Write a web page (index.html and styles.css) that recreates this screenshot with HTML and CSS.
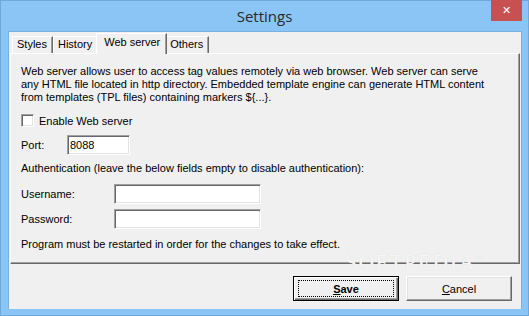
FILE: index.html
```html
<!DOCTYPE html>
<html lang="en">
<head>
    <meta charset="UTF-8">
    <title>Settings</title>
    <link rel="stylesheet" href="styles.css">
</head>
<body>
    <div class="window">
        <div class="titlebar">
            <span class="title">Settings</span>
            <div class="close">&#x2715;</div>
        </div>
        <div class="client">
            <div class="tabs">
                <div class="tab">Styles</div>
                <div class="tab">History</div>
                <div class="tab active">Web server</div>
                <div class="tab">Others</div>
            </div>
            <div class="panel">
                <p class="desc">Web server allows user to access tag values remotely via web browser. Web server can serve<br>any HTML file located in http directory. Embedded template engine can generate HTML content<br>from templates (TPL files) containing markers ${...}.</p>
                <div class="check-row">
                    <span class="checkbox"></span>
                    <span>Enable Web server</span>
                </div>
                <div class="field port-row">
                    <span class="label port-label">Port:</span>
                    <div class="input port-input">8088</div>
                </div>
                <p class="auth">Authentication (leave the below fields empty to disable authentication):</p>
                <div class="field user-row">
                    <span class="label">Username:</span>
                    <div class="input wide"></div>
                </div>
                <div class="field pass-row">
                    <span class="label">Password:</span>
                    <div class="input wide"></div>
                </div>
                <p class="note">Program must be restarted in order for the changes to take effect.</p>
            </div>
            <div class="buttons">
                <div class="btn default"><span class="focus"><u>S</u>ave</span></div>
                <div class="btn"><span><u>C</u>ancel</span></div>
            </div>
            <div class="mark">SOFTPEDIA<sup>™</sup></div>
        </div>
    </div>
</body>
</html>
```

FILE: styles.css
```css
body {
    margin: 0;
    font-family: "Liberation Sans", Arial, sans-serif;
    font-size: 11px;
    color: #000;
}
.window {
    width: 529px;
    height: 316px;
    background: #8bc5f6;
    box-sizing: border-box;
    border: 1px solid #6fa9dc;
}
.titlebar {
    position: relative;
    height: 30px;
    text-align: center;
}
.title {
    display: inline-block;
    margin-top: 5px;
    font-family: "Open Sans", "Noto Sans", sans-serif;
    font-size: 15px;
    line-height: 20px;
    color: #2a2a2a;
}
.close {
    position: absolute;
    top: -1px;
    right: 6px;
    width: 31px;
    height: 21px;
    background: #c75050;
    color: #fff;
    font-family: "DejaVu Sans", sans-serif;
    font-size: 11px;
    font-weight: bold;
    line-height: 21px;
    text-align: center;
}
.client {
    position: relative;
    margin: 0 6px 0 7px;
    height: 278px;
    background: #f0f0f0;
    padding: 1px 1px 0;
    box-sizing: border-box;
    border: 1px solid #78b0e0;
    border-bottom: none;
}
.tabs {
    display: flex;
    align-items: flex-end;
    height: 20px;
    padding-left: 2px;
}
.tab {
    height: 17px;
    box-sizing: border-box;
    padding: 0 5px 0 4px;
    line-height: 15px;
    border-top: 1px solid #fff;
    border-left: 1px solid #fff;
    border-right: 1px solid #696969;
    box-shadow: inset -1px 0 #a0a0a0;
    background: #f0f0f0;
}
.tab.active {
    position: relative;
    z-index: 1;
    height: 21px;
    margin: 0 -2px -1px;
    padding: 0 6px 0 7px;
    line-height: 16px;
}
.panel {
    border-top: 1px solid #fff;
    border-left: 1px solid #fff;
    border-right: 1px solid #696969;
    border-bottom: 1px solid #696969;
    box-shadow: inset -1px -1px #a0a0a0;
    padding: 11px 10px 12px;
}
p {
    margin: 0;
    line-height: 13px;
    white-space: nowrap;
}
.check-row {
    display: flex;
    align-items: center;
    gap: 5px;
    margin-top: 10px;
    height: 13px;
}
.checkbox, .input {
    box-sizing: border-box;
    background: #fff;
    border: 1px solid;
    border-color: #a0a0a0 #fff #fff #a0a0a0;
    box-shadow: inset 1px 1px #696969, inset -1px -1px #e3e3e3;
}
.checkbox {
    width: 13px;
    height: 13px;
}
.field {
    display: flex;
    align-items: center;
    height: 20px;
}
.port-row {
    margin-top: 8px;
}
.label {
    width: 93px;
}
.port-label {
    width: 46px;
}
.input {
    height: 20px;
    padding: 0 2px;
    line-height: 18px;
    font-size: 11px;
}
.port-input {
    width: 63px;
}
.wide {
    width: 147px;
}
.auth {
    margin-top: 7px;
}
.user-row {
    margin-top: 9px;
}
.pass-row {
    margin-top: 5px;
}
.note {
    margin-top: 9px;
}
.buttons {
    display: flex;
    justify-content: flex-end;
    gap: 7px;
    margin-top: 12px;
    padding-right: 8px;
}
.btn {
    width: 106px;
    height: 25px;
    box-sizing: border-box;
    display: flex;
    align-items: center;
    justify-content: center;
    border: 1px solid;
    border-color: #fff #696969 #696969 #fff;
    box-shadow: inset -1px -1px #a0a0a0, inset 1px 1px #e3e3e3;
    font-size: 11px;
}
.btn.default {
    border: 1px solid #000;
    box-shadow: inset 1px 1px #fff, inset -1px -1px #696969, inset -2px -2px #a0a0a0;
    font-weight: bold;
}
.focus {
    display: flex;
    align-items: center;
    justify-content: center;
    width: 96px;
    height: 17px;
    box-sizing: border-box;
    border: 1px dotted #000;
}
.mark {
    position: absolute;
    left: 336px;
    top: 218px;
    font-family: "Liberation Serif", serif;
    font-size: 21px;
    letter-spacing: 2px;
    color: #f6f6f6;
    text-shadow: 0 0 1px #d8d8d8;
}
.mark sup {
    font-size: 7px;
    letter-spacing: 0;
}
```
